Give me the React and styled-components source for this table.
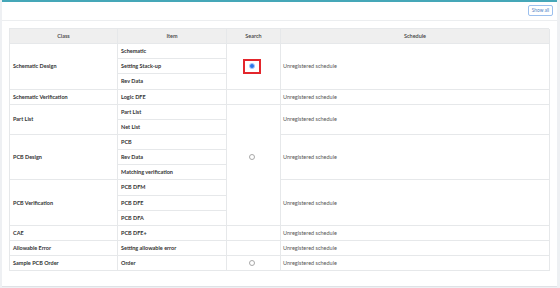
import React from 'react'
import styled, { createGlobalStyle } from 'styled-components'

const Global = createGlobalStyle`
  html, body {
    margin: 0;
    padding: 0;
    background: #eef0f3;
    font-family: Lato, "Liberation Sans", sans-serif;
  }
`

const rows = [
  { cls: 'Schematic Design', items: ['Schematic', 'Setting Stack-up', 'Rev Data'] },
  { cls: 'Schematic Verification', items: ['Logic DFE'] },
  { cls: 'Part List', items: ['Part List', 'Net List'] },
  { cls: 'PCB Design', items: ['PCB', 'Rev Data', 'Matching verification'] },
  { cls: 'PCB Verification', items: ['PCB DFM', 'PCB DFE', 'PCB DFA'] },
  { cls: 'CAE', items: ['PCB DFE+'] },
  { cls: 'Allowable Error', items: ['Setting allowable error'] },
  { cls: 'Sample PCB Order', items: ['Order'] },
]

// search column cells, keyed by the class row they start on
const search = {
  0: { span: 3, radio: 'on' },
  1: { span: 1 },
  2: { span: 8, radio: 'off', pad: 49 },
  5: { span: 1 },
  6: { span: 1 },
  7: { span: 1, radio: 'off' },
}

function App() {
  return (
    <>
      <Global />
      <Card>
        <TopBar>
          <ShowAll>Show all</ShowAll>
        </TopBar>
        <Body>
          <Grid>
            <Head>Class</Head>
            <Head>Item</Head>
            <Head>Search</Head>
            <Head>Schedule</Head>
            {rows.map((r, i) =>
              r.items.map((item, j) => (
                <React.Fragment key={i + '-' + j}>
                  {j === 0 && <ClassCell $span={r.items.length}>{r.cls}</ClassCell>}
                  <ItemCell>{item}</ItemCell>
                  {j === 0 && search[i] && (
                    <SearchCell $span={search[i].span} $pad={search[i].pad}>
                      {search[i].radio === 'on' && (
                        <Picked>
                          <Radio $on />
                        </Picked>
                      )}
                      {search[i].radio === 'off' && <Radio />}
                    </SearchCell>
                  )}
                  {j === 0 && (
                    <ScheduleCell $span={r.items.length}>Unregistered schedule</ScheduleCell>
                  )}
                </React.Fragment>
              ))
            )}
          </Grid>
        </Body>
      </Card>
    </>
  )
}

export default App

const Card = styled.div`
  margin-left: 2px;
  width: 555px;
  height: 287px;
  box-sizing: border-box;
  background: #fff;
  border-top: 2px solid #45a7b8;
  border-bottom: 1px solid #dfe2e6;
  display: flex;
  flex-direction: column;
`

const TopBar = styled.div`
  height: 19px;
  box-sizing: border-box;
  border-bottom: 1px solid #eceef0;
  display: flex;
  align-items: center;
  justify-content: flex-end;
  padding-right: 4px;
`

const ShowAll = styled.button`
  width: 25px;
  height: 11px;
  padding: 0;
  margin-top: -1px;
  border: 1px solid #9cc0ee;
  border-radius: 2px;
  background: #fff;
  color: #4f7fc4;
  font-family: inherit;
  font-size: 4.8px;
  line-height: 9px;
`

const Body = styled.div`
  padding: 7px 8px 0 7px;
`

const Grid = styled.div`
  display: grid;
  grid-template-columns: 108px 109px 54px 269px;
  grid-auto-rows: 15.15px;
  border-top: 1px solid #e6e8ea;
  border-left: 1px solid #e6e8ea;
`

const Cell = styled.div`
  grid-row: span ${p => p.$span || 1};
  border-right: 1px solid #e6e8ea;
  border-bottom: 1px solid #e6e8ea;
  display: flex;
  align-items: center;
  padding-left: 3px;
  font-size: 5.5px;
  color: #333;
  white-space: nowrap;
  overflow: hidden;
`

const Head = styled(Cell)`
  background: #efefef;
  justify-content: center;
  padding-left: 0;
  font-weight: 600;
  color: #444;
`

const ClassCell = styled(Cell)`
  font-weight: 700;
`

const ItemCell = styled(Cell)`
  font-weight: 700;
`

const SearchCell = styled(Cell)`
  justify-content: center;
  padding-left: 0;
  padding-right: 3px;
  align-items: ${p => (p.$pad ? 'flex-start' : 'center')};
  padding-top: ${p => p.$pad || 0}px;
`

const ScheduleCell = styled(Cell)`
  color: #555;
  padding-left: 2px;
`

const Picked = styled.div`
  width: 18px;
  height: 15px;
  box-sizing: border-box;
  border: 2px solid #e3262c;
  display: flex;
  align-items: center;
  justify-content: center;
`

const Radio = styled.span`
  width: 6px;
  height: 6px;
  box-sizing: border-box;
  border-radius: 50%;
  border: ${p => (p.$on ? '1.5px solid #a9cbfb' : '1px solid #a8a8a8')};
  background: ${p => (p.$on ? '#2b74e8' : '#fff')};
`
